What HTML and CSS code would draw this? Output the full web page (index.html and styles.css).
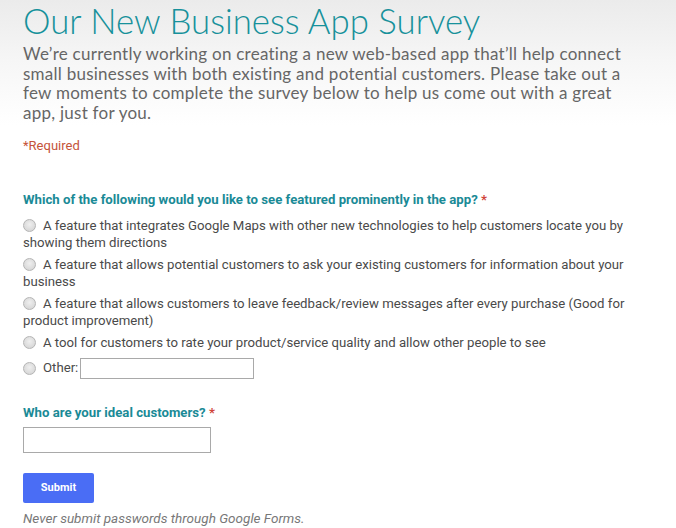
FILE: index.html
```html
<!DOCTYPE html>
<html>
<head>
<meta charset="utf-8">
<link rel="stylesheet" href="styles.css">
</head>
<body>
<div class="page">
  <header class="header">
    <h1 class="title">Our New Business App Survey</h1>
    <p class="desc">We’re currently working on creating a new web-based app that’ll help connect small businesses with both existing and potential customers. Please take out a few moments to complete the survey below to help us come out with a great app, just for you.</p>
  </header>
  <div class="required">*Required</div>
  <form class="form">
    <div class="question q1">
      <div class="qtitle">Which of the following would you like to see featured prominently in the app? <span class="star">*</span></div>
      <label class="opt"><span class="radio"></span>A feature that integrates Google Maps with other new technologies to help customers locate you by showing them directions</label>
      <label class="opt"><span class="radio"></span>A feature that allows potential customers to ask your existing customers for information about your business</label>
      <label class="opt"><span class="radio"></span>A feature that allows customers to leave feedback/review messages after every purchase (Good for product improvement)</label>
      <label class="opt"><span class="radio"></span>A tool for customers to rate your product/service quality and allow other people to see</label>
      <div class="opt other"><span class="radio"></span>Other:<span class="otherbox"></span></div>
    </div>
    <div class="question q2">
      <div class="qtitle">Who are your ideal customers? <span class="star">*</span></div>
      <div class="textbox"></div>
    </div>
    <div class="submitrow"><span class="submit">Submit</span></div>
    <div class="note">Never submit passwords through Google Forms.</div>
  </form>
</div>
</body>
</html>
```
FILE: styles.css
```css
html, body {
  margin: 0;
  padding: 0;
  background: #ffffff;
}
.page {
  width: 676px;
  height: 528px;
  overflow: hidden;
  font-family: Roboto, "Liberation Sans", sans-serif;
}
.header {
  background: linear-gradient(to bottom, #ebebeb 0px, #f6f6f6 60px, #ffffff 125px);
  padding: 1px 0 0 23px;
  height: 126px;
  box-sizing: border-box;
}
.title {
  margin: 0;
  font-family: Lato, sans-serif;
  font-weight: 300;
  font-size: 34.8px;
  line-height: 40px;
  color: #17919b;
}
.desc {
  margin: 3px 0 0 0;
  width: 620px;
  font-family: Lato, sans-serif;
  font-weight: 400;
  font-size: 17px;
  line-height: 19.7px;
  letter-spacing: 0.25px;
  color: #666666;
}
.required {
  margin: 12px 0 0 23px;
  font-size: 13px;
  line-height: 16px;
  color: #c5533a;
}
.form {
  padding-left: 23px;
}
.question {
  display: flex;
  flex-direction: column;
}
.q1 {
  margin-top: 38px;
}
.qtitle {
  font-weight: 700;
  font-size: 13.2px;
  line-height: 16px;
  color: #1a8a96;
  margin-bottom: 10px;
}
.star {
  color: #d0453a;
}
.opt {
  display: block;
  font-size: 13.2px;
  line-height: 16.5px;
  color: #4a4a4a;
  margin-bottom: 6px;
  padding-right: 40px;
}
.radio {
  display: inline-block;
  width: 11px;
  height: 11px;
  border-radius: 50%;
  border: 1px solid #b5b5b5;
  background: radial-gradient(circle at 50% 40%, #efefef, #d0d0d0);
  vertical-align: -1.5px;
  margin-right: 7px;
}
.other {
  display: flex;
  align-items: center;
  height: 21px;
}
.otherbox {
  display: inline-block;
  width: 172px;
  height: 19px;
  border: 1px solid #a9a9a9;
  margin-left: 2px;
  background: #fff;
}
.q2 {
  margin-top: 20px;
}
.q2 .qtitle {
  margin-bottom: 6px;
}
.textbox {
  width: 186px;
  height: 24px;
  border: 1px solid #a9a9a9;
  background: #fff;
}
.submitrow {
  margin-top: 20px;
  line-height: 0;
}
.submit {
  display: inline-flex;
  align-items: center;
  justify-content: center;
  width: 71px;
  height: 30px;
  border-radius: 2px;
  background: #4a6df5;
  color: #ffffff;
  font-weight: 700;
  font-size: 11px;
  line-height: 12px;
}
.note {
  margin-top: 7px;
  font-style: italic;
  font-size: 13.5px;
  line-height: 16px;
  color: #787878;
}
```
